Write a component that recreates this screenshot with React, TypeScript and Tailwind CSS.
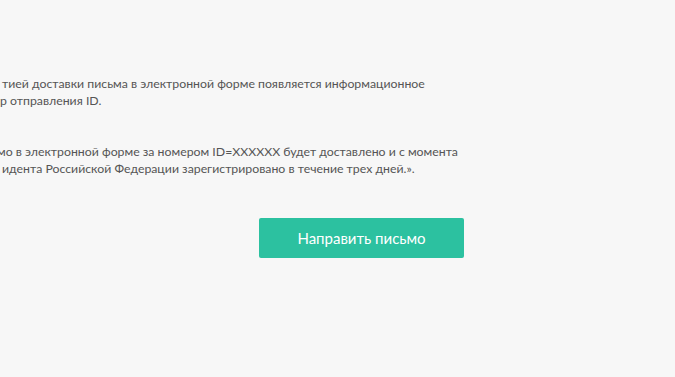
export default function App() {
  return (
    <div className="flex h-[377px] w-[675px] flex-col overflow-hidden bg-[#f7f7f7] font-['Lato',Arial,sans-serif] text-[12.3px] leading-[17px] text-[#555]">
      <div className="flex flex-col gap-[34px] pt-[75px]">
        <p className="whitespace-nowrap">
          <span className="block pl-[2px]">тией доставки письма в электронной форме появляется информационное</span>
          <span className="block">р отправления ID.</span>
        </p>
        <p className="whitespace-nowrap">
          <span className="block -ml-[3px]">мо в электронной форме за номером ID=XXXXXX будет доставлено и с момента</span>
          <span className="block pl-[2px]">идента Российской Федерации зарегистрировано в течение трех дней.».</span>
        </p>
      </div>
      <div className="mt-[41px] flex pl-[259px]">
        <button className="h-[40px] w-[205px] rounded-[2px] bg-[#2cc1a0] text-[15px] text-white">
          Направить письмо
        </button>
      </div>
    </div>
  );
}
